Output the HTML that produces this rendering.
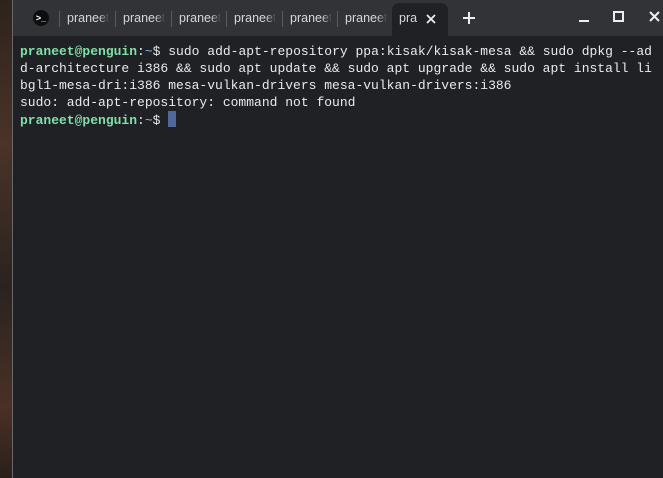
<!DOCTYPE html>
<html><head><style>
body{margin:0;width:663px;height:478px;overflow:hidden;background:#3a2a22;position:relative;font-family:"Liberation Sans",sans-serif}
.bg{position:absolute;left:0;top:0;width:12px;height:478px;background:linear-gradient(180deg,#2e231d,#4a3328 30%,#2a2320 60%,#4a3026 85%,#2a201b)}
.win{position:absolute;left:12px;top:0;width:651px;height:478px;background:#202124;border-left:1px solid #6a6a6a;box-sizing:border-box}
.bar{position:absolute;left:0;top:0;width:651px;height:36px;background:#323336}
.tab{position:absolute;top:11px;height:16px;font-size:12.5px;color:#d8d8d8;overflow:hidden;white-space:nowrap;border-left:1px solid #5a5b5e;padding-left:7px;width:42px;
-webkit-mask-image:linear-gradient(90deg,#000 80%,transparent 100%)}
.act{position:absolute;left:379px;top:3px;width:56px;height:33px;background:#202124;border-radius:7px 7px 0 0}
pre{position:absolute;left:7px;top:43px;margin:0;font-family:"Liberation Mono",monospace;font-size:13px;line-height:17px;color:#e8eaed}
.g{color:#7fe0a8;font-weight:bold}
.b{color:#8ab4f8}
.cur{display:inline-block;width:8px;height:16px;background:#4f6a9a;vertical-align:-3px}
</style></head><body>
<div class="bg"></div>
<div class="win">
<div class="bar">
<div style="position:absolute;left:20px;top:10px;width:16px;height:16px;border-radius:50%;background:#0e0e10;color:#fff;font-size:9px;font-weight:bold;line-height:16px;text-align:center">&gt;_</div>
<div class="tab" style="left:46px">praneet</div>
<div class="tab" style="left:102px">praneet</div>
<div class="tab" style="left:158px">praneet</div>
<div class="tab" style="left:213px">praneet</div>
<div class="tab" style="left:269px">praneet</div>
<div class="tab" style="left:324px">praneet</div>
<div class="act"><span style="position:absolute;left:7px;top:8px;font-size:12.5px;color:#d8d8d8;width:18px;overflow:hidden;white-space:nowrap">praneet</span>
<svg style="position:absolute;left:34px;top:11px" width="10" height="10"><path d="M1 1L9 9M9 1L1 9" stroke="#eee" stroke-width="1.8"/></svg></div>
<svg style="position:absolute;left:450px;top:12px" width="12" height="12"><path d="M6 0V12M0 6H12" stroke="#eee" stroke-width="2"/></svg>
<div style="position:absolute;left:566px;top:20px;width:10px;height:2px;background:#eee"></div>
<div style="position:absolute;left:600px;top:11px;width:7px;height:7px;border:2px solid #eee"></div>
<svg style="position:absolute;left:636px;top:11px" width="11" height="11"><path d="M1 1L10 10M10 1L1 10" stroke="#eee" stroke-width="2"/></svg>
</div>
<pre><span class="g">praneet@penguin</span>:<span class="b">~</span>$ sudo add-apt-repository ppa:kisak/kisak-mesa &amp;&amp; sudo dpkg --ad
d-architecture i386 &amp;&amp; sudo apt update &amp;&amp; sudo apt upgrade &amp;&amp; sudo apt install li
bgl1-mesa-dri:i386 mesa-vulkan-drivers mesa-vulkan-drivers:i386
sudo: add-apt-repository: command not found
<span class="g">praneet@penguin</span>:<span class="b">~</span>$ <span class="cur"></span></pre>
</div>
</body></html>
